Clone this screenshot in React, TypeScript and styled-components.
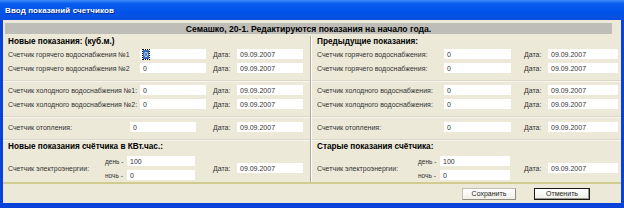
import React from 'react';
import styled, { createGlobalStyle } from 'styled-components';

const GlobalStyle = createGlobalStyle`
  html, body {
    margin: 0;
    padding: 0;
    background: #ffffff;
  }
  body {
    font-family: "Liberation Sans", Arial, sans-serif;
  }
`;

const Window = styled.div`
  width: 624px;
  height: 208px;
  display: flex;
  flex-direction: column;
  box-sizing: border-box;
  background: #0842d8;
`;

const TitleBar = styled.div`
  height: 20px;
  flex-shrink: 0;
  display: flex;
  align-items: center;
  padding-left: 5px;
  background: linear-gradient(to bottom, #3d8cf8 0%, #0a5cf0 18%, #0153e9 60%, #0a4ede 100%);
  color: #ffffff;
  font-size: 8px;
  font-weight: bold;
  letter-spacing: 0.1px;
  text-shadow: 1px 1px 0 #0a2a8a;
`;

const Frame = styled.div`
  flex: 1;
  display: flex;
  flex-direction: column;
  margin: 0 3px 5px 3px;
  background: #ece9d8;
  color: #1b1b1b;
  font-size: 7px;
`;

const HeaderBar = styled.div`
  height: 11px;
  margin: 3px 9px 1px 2px;
  background: #bebdb8;
  display: flex;
  align-items: center;
  justify-content: center;
  font-size: 8.6px;
  font-weight: bold;
  color: #000;
`;

const Panels = styled.div`
  height: 147px;
  display: grid;
  grid-template-columns: 307px 2px 1fr;
`;

const VDivider = styled.div`
  margin-top: 1px;
  border-left: 1px solid #aca899;
  border-right: 1px solid #ffffff;
`;

const Panel = styled.div<{ $pad: number }>`
  display: flex;
  flex-direction: column;
  padding-left: ${(p) => p.$pad}px;
`;

const SectionTitle = styled.div<{ $h: number }>`
  height: ${(p) => p.$h}px;
  display: flex;
  align-items: center;
  font-weight: bold;
  font-size: 8.2px;
  color: #000;
`;

const Row = styled.div<{ $mt: number }>`
  height: 12px;
  margin-top: ${(p) => p.$mt}px;
  display: flex;
  align-items: center;
`;

const HDivider = styled.div<{ $mt: number }>`
  margin: ${(p) => p.$mt}px 0 0 -5px;
  height: 0;
  border-top: 1px solid #dcd8c8;
  border-bottom: 1px solid #f7f6f0;
`;

const Label = styled.div<{ $w: number }>`
  width: ${(p) => p.$w}px;
  flex-shrink: 0;
  white-space: nowrap;
  color: #333;
`;

const Field = styled.div<{ $w: number }>`
  width: ${(p) => p.$w}px;
  height: 10px;
  flex-shrink: 0;
  background: #ffffff;
  display: flex;
  align-items: center;
  padding-left: 3px;
  box-sizing: border-box;
  font-size: 7px;
  color: #333;
`;

const Selected = styled.span`
  background: #316ac5;
  color: #fff;
  outline: 1px dotted #000;
  padding: 0 1px;
  line-height: 9px;
`;

const DateLabel = styled.div<{ $ml: number }>`
  margin-left: ${(p) => p.$ml}px;
  width: 24px;
  flex-shrink: 0;
  color: #333;
`;

const ElecBlock = styled.div`
  margin-top: 4px;
  height: 26px;
  display: flex;
  align-items: center;
`;

const Pair = styled.div`
  display: flex;
  flex-direction: column;
  gap: 2px;
`;

const PairRow = styled.div`
  height: 12px;
  display: flex;
  align-items: center;
`;

const Small = styled.div<{ $w: number }>`
  width: ${(p) => p.$w}px;
  flex-shrink: 0;
  white-space: nowrap;
  font-size: 6.5px;
  color: #333;
`;

const OliveLine = styled.div`
  height: 2px;
  background: #cfcc8e;
`;

const Footer = styled.div`
  flex: 1;
  display: flex;
  align-items: center;
  padding-left: 459px;
  gap: 18px;
`;

const Button = styled.button<{ $w: number; $primary?: boolean }>`
  width: ${(p) => p.$w}px;
  height: 12px;
  padding: 0;
  font-family: "Liberation Sans", Arial, sans-serif;
  font-size: 7px;
  color: #222;
  background: linear-gradient(to bottom, #ffffff, #f0efe8);
  border: 1px solid ${(p) => (p.$primary ? '#1a1a1a' : '#c4c1b4')};
  border-right-color: ${(p) => (p.$primary ? '#1a1a1a' : '#8f8c80')};
  border-bottom-color: ${(p) => (p.$primary ? '#1a1a1a' : '#8f8c80')};
  box-shadow: ${(p) => (p.$primary ? 'inset -1px -1px 0 #9a978b' : 'none')};
  display: flex;
  align-items: center;
  justify-content: center;
`;

type Side = {
  pad: number;
  title: string;
  labelW: number;
  fieldW: number;
  dateGap: number;
  dateW: number;
  labels: string[];
  heatW: number;
  heatFieldW: number;
  heatGap: number;
  sub: string;
  elecW: number;
  dayW: number;
  dayFieldW: number;
  elecGap: number;
  focus?: boolean;
};

const left: Side = {
  pad: 5,
  title: 'Новые показания: (куб.м.)',
  labelW: 132,
  fieldW: 66,
  dateGap: 7,
  dateW: 66,
  labels: [
    'Счетчик горячего водоснабжения №1',
    'Счетчик горячего водоснабжения №2',
    'Счетчик холодного водоснабжения №1:',
    'Счетчик холодного водоснабжения №2:',
  ],
  heatW: 122,
  heatFieldW: 66,
  heatGap: 17,
  sub: 'Новые показания счётчика в КВт.час.:',
  elecW: 97,
  dayW: 22,
  dayFieldW: 68,
  elecGap: 18,
  focus: true,
};

const right: Side = {
  pad: 5,
  title: 'Предыдущие показания:',
  labelW: 127,
  fieldW: 67,
  dateGap: 13,
  dateW: 70,
  labels: [
    'Счетчик горячего водоснабжения:',
    'Счетчик горячего водоснабжения:',
    'Счетчик холодного водоснабжения:',
    'Счетчик холодного водоснабжения:',
  ],
  heatW: 127,
  heatFieldW: 67,
  heatGap: 13,
  sub: 'Старые показания счётчика:',
  elecW: 101,
  dayW: 22,
  dayFieldW: 70,
  elecGap: 14,
};

const DATE = '09.09.2007';

function SidePanel({ s }: { s: Side }) {
  const row = (label: string, mt: number, i: number) => (
    <Row $mt={mt} key={i}>
      <Label $w={s.labelW}>{label}</Label>
      <Field $w={s.fieldW}>{s.focus && i === 0 ? <Selected>0</Selected> : '0'}</Field>
      <DateLabel $ml={s.dateGap}>Дата:</DateLabel>
      <Field $w={s.dateW}>{DATE}</Field>
    </Row>
  );

  return (
    <Panel $pad={s.pad}>
      <SectionTitle $h={13}>{s.title}</SectionTitle>
      {row(s.labels[0], 0, 0)}
      {row(s.labels[1], 2, 1)}
      <HDivider $mt={6} />
      {row(s.labels[2], 2, 2)}
      {row(s.labels[3], 2, 3)}
      <HDivider $mt={6} />
      <Row $mt={3}>
        <Label $w={s.heatW}>Счетчик отопления:</Label>
        <Field $w={s.heatFieldW}>0</Field>
        <DateLabel $ml={s.heatGap}>Дата:</DateLabel>
        <Field $w={s.dateW}>{DATE}</Field>
      </Row>
      <HDivider $mt={6} />
      <SectionTitle $h={10}>{s.sub}</SectionTitle>
      <ElecBlock>
        <Label $w={s.elecW}>Счетчик электроэнергии:</Label>
        <Pair>
          <PairRow>
            <Small $w={s.dayW}>день -</Small>
            <Field $w={s.dayFieldW}>100</Field>
          </PairRow>
          <PairRow>
            <Small $w={s.dayW}>ночь -</Small>
            <Field $w={s.dayFieldW}>0</Field>
          </PairRow>
        </Pair>
        <DateLabel $ml={s.elecGap}>Дата:</DateLabel>
        <Field $w={s.dateW}>{DATE}</Field>
      </ElecBlock>
    </Panel>
  );
}

export default function App() {
  return (
    <>
      <GlobalStyle />
      <Window>
        <TitleBar>Ввод показаний счетчиков</TitleBar>
        <Frame>
          <HeaderBar>Семашко, 20-1. Редактируются показания на начало года.</HeaderBar>
          <Panels>
            <SidePanel s={left} />
            <VDivider />
            <SidePanel s={right} />
          </Panels>
          <OliveLine />
          <Footer>
            <Button $w={54}>Сохранить</Button>
            <Button $w={56} $primary>Отменить</Button>
          </Footer>
        </Frame>
      </Window>
    </>
  );
}
